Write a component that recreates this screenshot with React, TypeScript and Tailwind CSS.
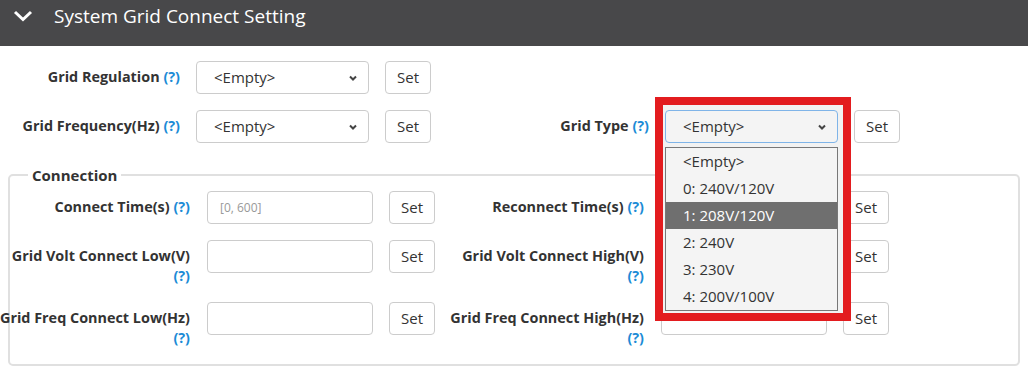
import React from "react";

const Help: React.FC = () => <span className="font-bold text-[#1b8bd6]">(?)</span>;

const Label: React.FC<{ text: string; wrap?: boolean }> = ({ text, wrap }) => (
  <div className="flex w-[180px] shrink-0 flex-col items-end pt-[6px] text-[14.4px] font-bold leading-[20px] text-[#333]">
    {wrap ? (
      <>
        <span className="whitespace-nowrap">{text}</span>
        <Help />
      </>
    ) : (
      <span className="whitespace-nowrap">
        {text} <Help />
      </span>
    )}
  </div>
);

const Chevron: React.FC = () => (
  <svg width="10" height="7" viewBox="0 0 10 7" className="absolute right-[10px] top-[13px]">
    <polyline points="2,1.5 5,4.5 8,1.5" fill="none" stroke="#444" strokeWidth="2" />
  </svg>
);

const SetButton: React.FC = () => (
  <button className="flex h-[33px] w-[46px] shrink-0 items-center justify-center rounded-[4px] border border-[#ccc] bg-white text-[15px] text-[#333]">
    Set
  </button>
);

const Select: React.FC = () => (
  <div className="relative flex h-[33px] w-[173px] shrink-0 items-center rounded-[4px] border border-[#ccc] bg-white pl-[17px] text-[15px] text-[#333]">
    &lt;Empty&gt;
    <Chevron />
  </div>
);

const Input: React.FC<{ placeholder?: string }> = ({ placeholder }) => (
  <div className="flex h-[33px] w-[166px] shrink-0 items-center rounded-[4px] border border-[#ccc] bg-white pl-[12px] text-[12px] text-[#999]">
    {placeholder}
  </div>
);

const options = ["<Empty>", "0: 240V/120V", "1: 208V/120V", "2: 240V", "3: 230V", "4: 200V/100V"];

const GridTypeSelect: React.FC = () => (
  <div className="relative h-[33px] w-[173px] shrink-0">
    {/* annotation box */}
    <div className="absolute left-[-10px] top-[-13px] z-10 h-[224px] w-[196px] border-[8px] border-[#e31c1f] bg-[#f2f2f2]" />
    <div className="relative z-20 flex h-[33px] w-[173px] items-center rounded-[4px] border border-[#7fb4e8] bg-[#f4f4f4] pl-[17px] text-[15px] text-[#333]">
      &lt;Empty&gt;
      <Chevron />
    </div>
    <div className="absolute left-0 top-[37px] z-20 w-[173px] border border-[#777] bg-[#f4f4f4] text-[15px]">
      {options.map((o, i) => (
        <div
          key={o}
          className={
            i === 2
              ? "flex h-[27px] items-center bg-[#6f6f6f] pl-[17px] text-white"
              : "flex h-[27px] items-center pl-[17px] text-[#333]"
          }
        >
          {o}
        </div>
      ))}
    </div>
  </div>
);

export default function App() {
  return (
    <div className="w-[1028px] bg-white pb-[4px] font-['Segoe_UI','Open_Sans',sans-serif]">
      <div className="h-[46px] bg-[#48484a]">
        <div className="flex h-[32px] items-center">
          <svg width="20" height="12" viewBox="0 0 20 12" className="ml-[13px]">
            <polyline points="2,2 10,9.5 18,2" fill="none" stroke="#fff" strokeWidth="3" />
          </svg>
          <span className="ml-[21px] text-[19px] text-white">System Grid Connect Setting</span>
        </div>
      </div>

      <div className="flex flex-col gap-4 pt-[15px]">
        <div className="flex">
          <div className="flex w-[469px] items-start gap-4">
            <Label text="Grid Regulation" />
            <Select />
            <SetButton />
          </div>
        </div>
        <div className="flex">
          <div className="flex w-[469px] items-start gap-4">
            <Label text="Grid Frequency(Hz)" />
            <Select />
            <SetButton />
          </div>
          <div className="flex items-start gap-4">
            <Label text="Grid Type" />
            <GridTypeSelect />
            <SetButton />
          </div>
        </div>
      </div>

      <fieldset className="mx-2 mt-[22px] rounded-[5px] border-2 border-[#e0e0e0] pb-[16px] pt-[6px]">
        <legend className="ml-[18px] px-[4px] text-[15px] font-bold leading-[20px] text-[#333]">Connection</legend>
        <div className="flex flex-col gap-4">
          <div className="flex">
            <div className="flex w-[454px] items-start">
              <Label text="Connect Time(s)" />
              <div className="ml-[17px] flex gap-4">
                <Input placeholder="[0, 600]" />
                <SetButton />
              </div>
            </div>
            <div className="flex items-start">
              <Label text="Reconnect Time(s)" />
              <div className="ml-[17px] flex gap-4">
                <Input />
                <SetButton />
              </div>
            </div>
          </div>
          <div className="flex">
            <div className="flex w-[454px] items-start">
              <Label text="Grid Volt Connect Low(V)" wrap />
              <div className="ml-[17px] flex gap-4">
                <Input />
                <SetButton />
              </div>
            </div>
            <div className="flex items-start">
              <Label text="Grid Volt Connect High(V)" wrap />
              <div className="ml-[17px] flex gap-4">
                <Input />
                <SetButton />
              </div>
            </div>
          </div>
          <div className="flex">
            <div className="flex w-[454px] items-start">
              <Label text="Grid Freq Connect Low(Hz)" wrap />
              <div className="ml-[17px] flex gap-4">
                <Input />
                <SetButton />
              </div>
            </div>
            <div className="flex items-start">
              <Label text="Grid Freq Connect High(Hz)" wrap />
              <div className="ml-[17px] flex gap-4">
                <Input />
                <SetButton />
              </div>
            </div>
          </div>
        </div>
      </fieldset>
    </div>
  );
}
